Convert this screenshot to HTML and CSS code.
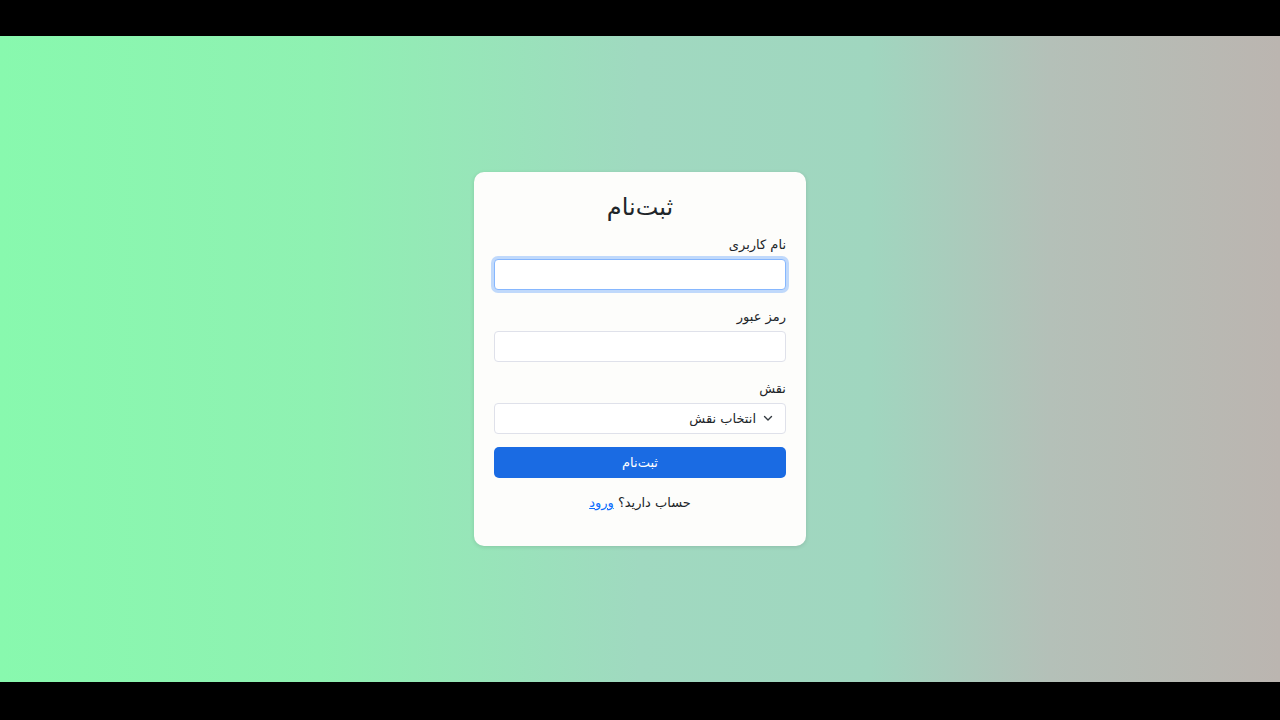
FILE: index.html
```html
<!DOCTYPE html>
<html lang="fa" dir="rtl">
<head>
<meta charset="utf-8">
<title>ثبت‌نام</title>
<link rel="stylesheet" href="styles.css">
</head>
<body>
<main class="stage">
  <form class="card">
    <h2 class="title">ثبت‌نام</h2>
    <div class="field">
      <label class="label" for="u">نام کاربری</label>
      <input class="input is-focus" id="u" type="text">
    </div>
    <div class="field">
      <label class="label" for="p">رمز عبور</label>
      <input class="input" id="p" type="password">
    </div>
    <div class="field field-last">
      <label class="label" for="r">نقش</label>
      <div class="select-wrap">
        <select class="input select" id="r">
          <option>انتخاب نقش</option>
        </select>
        <svg class="chev" width="12" height="12" viewBox="0 0 12 12"><path d="M2.5 4.5 L6 8 L9.5 4.5" fill="none" stroke="#343a40" stroke-width="1.4" stroke-linecap="round" stroke-linejoin="round"/></svg>
      </div>
    </div>
    <button class="btn" type="button">ثبت‌نام</button>
    <p class="foot">حساب دارید؟ <a href="#" class="link">ورود</a></p>
  </form>
</main>
</body>
</html>
```
FILE: styles.css
```css
* { box-sizing: border-box; }
html, body { margin: 0; padding: 0; }
body {
  background: #000;
  font-family: "DejaVu Sans", "Noto Sans", sans-serif;
  color: #212529;
  height: 720px;
  overflow: hidden;
}
.stage {
  margin-top: 36px;
  height: 646px;
  background: linear-gradient(to right, #88f9ae 0%, #8ff1b2 25%, #a0d9c0 50%, #a0d6bf 68%, #b4c0b8 82%, #bbb5b0 100%);
  display: flex;
  align-items: center;
  justify-content: center;
}
.card {
  width: 332px;
  background: #fdfdfb;
  border-radius: 10px;
  padding: 20px;
  box-shadow: 0 1px 4px rgba(0,0,0,0.12);
  display: flex;
  flex-direction: column;
}
.title {
  margin: 0 0 13px;
  font-size: 24px;
  line-height: 30px;
  font-weight: 500;
  text-align: center;
}
.field {
  display: flex;
  flex-direction: column;
  margin-bottom: 17px;
}
.field-last { margin-bottom: 13px; }
.label {
  font-size: 13px;
  line-height: 20px;
  margin-bottom: 4px;
  text-align: right;
}
.input {
  height: 31px;
  width: 100%;
  border: 1px solid #dfe1ea;
  border-radius: 4px;
  background: #fff;
  font-family: inherit;
  font-size: 13px;
  color: #212529;
  padding: 0 12px;
  outline: none;
}
.is-focus {
  border-color: #86b7fe;
  box-shadow: 0 0 0 3px rgba(13,110,253,0.25);
}
.select-wrap { position: relative; }
.select {
  appearance: none;
  -webkit-appearance: none;
  padding-right: 29px;
  text-align: right;
}
.chev {
  position: absolute;
  right: 12px;
  top: 9px;
  pointer-events: none;
}
.btn {
  height: 31px;
  border: 0;
  border-radius: 5px;
  background: #1a6be3;
  color: #fff;
  font-family: inherit;
  font-size: 13px;
  margin-bottom: 15px;
}
.foot {
  margin: 0 0 13px;
  font-size: 13px;
  line-height: 20px;
  text-align: center;
}
.link { color: #0d6efd; text-decoration: underline; }
```
